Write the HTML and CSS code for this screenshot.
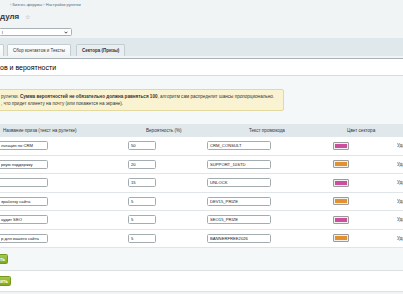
FILE: index.html
```html
<!DOCTYPE html>
<html>

<head>
  <title>Настройки рулетки</title>
  <link rel="stylesheet" href="styles.css">
</head>

<body>
  <div class="crumbs">› <span class="crumb">Бизнес-форумы</span> › <span class="crumb">Настройки рулетки</span></div>

  <div class="title-row">
    <h1 class="title">дуля</h1>
    <span class="star">☆</span>
  </div>

  <div class="select">
    <span class="select-text">l</span>
    <svg class="select-arrow" width="4" height="3" viewBox="0 0 4 3">
      <path d="M0.5 0.7 L2 2.2 L3.5 0.7" fill="none" stroke="#222" stroke-width="0.8" />
    </svg>
  </div>

  <div class="tabs">
    <div class="tab tab-cut">Основные</div>
    <div class="tab">Сбор контактов и Тексты</div>
    <div class="tab active">Сектора (Призы)</div>
  </div>

  <div class="panel">
    <div class="panel-head">
      <h2>ов и вероятности</h2>
    </div>

    <div class="notice-wrap">
      <div class="notice">
        рулетки. <b>Сумма вероятностей не обязательно должна равняться 100</b>, алгоритм сам распределит шансы пропорционально.<br>
        , что придет клиенту на почту (или покажется на экране).
      </div>
    </div>

    <div class="table">
      <div class="row head">
        <div class="cell">Название приза (текст на рулетке)</div>
        <div class="cell">Вероятность (%)</div>
        <div class="cell">Текст промокода</div>
        <div class="cell">Цвет сектора</div>
        <div class="cell"></div>
      </div>

      <div class="row">
        <div class="cell"><input class="field name" value="льтация по CRM"></div>
        <div class="cell"><input class="field prob" value="50"></div>
        <div class="cell"><input class="field code" value="CRM_CONSULT"></div>
        <div class="cell"><span class="swatch"><i class="pink"></i></span></div>
        <div class="cell del">Удалить</div>
      </div>

      <div class="row">
        <div class="cell"><input class="field name" value="рвую поддержку"></div>
        <div class="cell"><input class="field prob" value="20"></div>
        <div class="cell"><input class="field code" value="SUPPORT_10STD"></div>
        <div class="cell"><span class="swatch"><i class="orange"></i></span></div>
        <div class="cell del">Удалить</div>
      </div>

      <div class="row">
        <div class="cell"><input class="field name" value=""></div>
        <div class="cell"><input class="field prob" value="15"></div>
        <div class="cell"><input class="field code" value="UNLOCK"></div>
        <div class="cell"><span class="swatch"><i class="pink"></i></span></div>
        <div class="cell del">Удалить</div>
      </div>

      <div class="row">
        <div class="cell"><input class="field name" value="зработку сайта"></div>
        <div class="cell"><input class="field prob" value="5"></div>
        <div class="cell"><input class="field code" value="DEV15_PRIZE"></div>
        <div class="cell"><span class="swatch"><i class="orange"></i></span></div>
        <div class="cell del">Удалить</div>
      </div>

      <div class="row">
        <div class="cell"><input class="field name" value="аудит SEO"></div>
        <div class="cell"><input class="field prob" value="5"></div>
        <div class="cell"><input class="field code" value="SEO15_PRIZE"></div>
        <div class="cell"><span class="swatch"><i class="pink"></i></span></div>
        <div class="cell del">Удалить</div>
      </div>

      <div class="row">
        <div class="cell"><input class="field name" value="р для вашего сайта"></div>
        <div class="cell"><input class="field prob" value="5"></div>
        <div class="cell"><input class="field code" value="BANNERFREE2026"></div>
        <div class="cell"><span class="swatch"><i class="orange"></i></span></div>
        <div class="cell del">Удалить</div>
      </div>
    </div>

    <div class="add-row">
      <button class="btn btn-add">Добавить</button>
    </div>

    <div class="save-row">
      <button class="btn btn-save">Сохранить</button>
    </div>
  </div>
</body>

</html>
```

FILE: styles.css
```css
* {
  box-sizing: border-box;
}

body {
  margin: 0;
  width: 403px;
  height: 294px;
  overflow: hidden;
  background: #f0f4f5;
  font-family: "Liberation Sans", Arial, sans-serif;
  color: #333;
}

/* Header */
.crumbs {
  height: 11px;
  padding: 3px 0 0 10px;
  font-size: 4px;
  line-height: 4px;
  color: #6b8394;
}

.crumb {
  color: #4f6f85;
}

.title-row {
  display: flex;
  align-items: center;
  gap: 6px;
  height: 17px;
  padding-bottom: 6px;
}

.title {
  margin: 0;
  font-size: 8px;
  line-height: 8px;
  font-weight: bold;
  color: #3a3a3a;
}

.star {
  font-size: 6px;
  line-height: 6px;
  color: #9aa4a9;
}

.select {
  display: flex;
  align-items: center;
  justify-content: space-between;
  width: 73px;
  height: 8px;
  margin-left: -1px;
  padding: 0 3px 0 2px;
  background: #fff;
  border: 1px solid #a7b2b7;
  border-radius: 1.5px;
  font-size: 4px;
}

/* Tabs */
.tabs {
  display: flex;
  align-items: flex-end;
  gap: 3px;
  height: 18px;
  margin-top: 2px;
  background: #e1e8eb;
}

.tab {
  height: 12px;
  padding: 0 5px;
  font-size: 4.5px;
  line-height: 11px;
  color: #333;
  background: linear-gradient(#fdfefe, #f1f4f5);
  border: 1px solid #c4ced2;
  border-bottom: none;
  border-radius: 2px 2px 0 0;
  white-space: nowrap;
}

.tab-cut {
  width: 20px;
  margin-left: -16px;
  overflow: hidden;
  color: transparent;
}

.tab.active {
  margin-left: 2px;
  background: #e9eef0;
  font-weight: bold;
}

/* Panel */
.panel {
  margin-top: 2px;
  border-top: 1px solid #a9b2b6;
}

.panel-head {
  height: 17px;
  padding-top: 5px;
  background: #fff;
  border-bottom: 1px solid #d6dcdf;
}

.panel-head h2 {
  margin: 0;
  font-size: 7px;
  line-height: 7px;
  font-weight: normal;
  color: #000;
}

.notice-wrap {
  height: 48px;
  padding-top: 13px;
  background: #f5f8f9;
}

.notice {
  width: 290px;
  height: 22px;
  margin-left: -6px;
  padding: 4px 0 0 6px;
  font-size: 4.6px;
  line-height: 6.6px;
  color: #333;
  background: #f9f3d2;
  border: 1px solid #e3d89e;
  border-radius: 2px;
  white-space: nowrap;
}

/* Table */
.row {
  display: grid;
  grid-template-columns: 124px 79px 126px 64px 1fr;
  align-items: center;
  height: 18.5px;
  background: #fff;
  border-bottom: 1px solid #e0e5e7;
}

.row.head {
  height: 13px;
  background: #e1e8eb;
  border-bottom: none;
  font-size: 4.6px;
  color: #333;
}

.row.head .cell:nth-child(1) {
  padding-left: 3px;
}

.row.head .cell:nth-child(2) {
  padding-left: 22px;
}

.row.head .cell:nth-child(3) {
  padding-left: 46px;
}

.row.head .cell:nth-child(4) {
  padding-left: 18px;
}

.cell {
  padding-left: 4px;
  white-space: nowrap;
  overflow: hidden;
}

.row .cell:first-child {
  padding-left: 0;
  overflow: visible;
}

.field {
  display: block;
  height: 9px;
  padding: 0 2px;
  font-family: "Liberation Sans", Arial, sans-serif;
  font-size: 4.2px;
  color: #222;
  background: #fff;
  border: 1px solid #a3adb1;
  border-radius: 1.5px;
  outline: none;
}

.field.name {
  width: 60px;
  margin-left: -12px;
  padding-left: 12px;
}

.field.prob {
  width: 28px;
}

.field.code {
  width: 64px;
}

.swatch {
  display: block;
  width: 16px;
  height: 8px;
  padding: 1px;
  background: #f0f0f0;
  border: 1px solid #9b9b9b;
  border-radius: 1px;
}

.swatch i {
  display: block;
  height: 100%;
}

.pink {
  background: #cc4f9d;
}

.orange {
  background: #e3922b;
}

.del {
  font-size: 4.6px;
  color: #333;
}

/* Footer */
.add-row {
  height: 23px;
  padding-top: 6px;
  background: #f5f8f9;
  border-bottom: 1px solid #dbe1e3;
}

.save-row {
  height: 21px;
  padding-top: 5px;
  background: #fff;
  border-bottom: 1px solid #dbe1e3;
}

.btn {
  display: block;
  height: 10px;
  padding: 0 2px 0 0;
  font-family: "Liberation Sans", Arial, sans-serif;
  font-size: 4.5px;
  font-weight: bold;
  color: #fff;
  text-align: right;
  background: linear-gradient(#a5c84a, #80aa1e);
  border: 1px solid #74991c;
  border-radius: 1.5px;
  overflow: hidden;
  white-space: nowrap;
}

.btn-add {
  width: 30px;
  margin-left: -22px;
}

.btn-save {
  width: 33px;
  margin-left: -22px;
}
```
